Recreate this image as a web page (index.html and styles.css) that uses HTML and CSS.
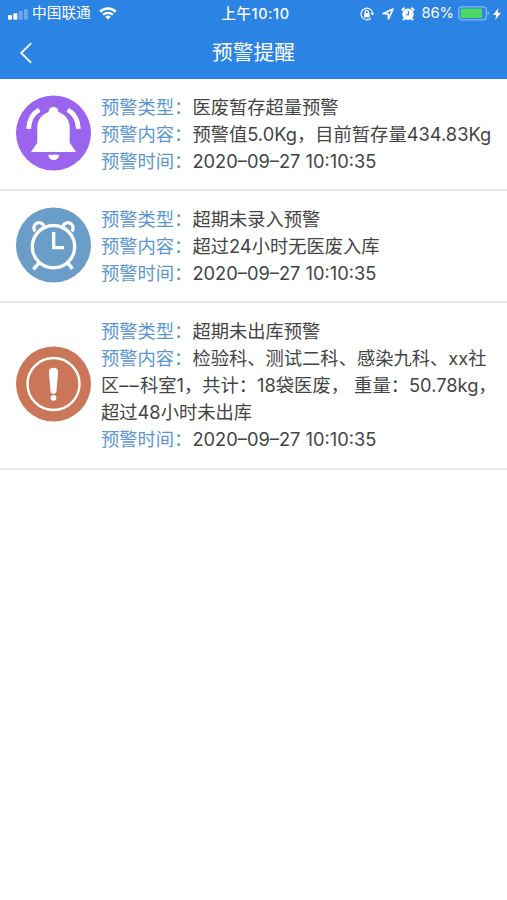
FILE: index.html
```
<!DOCTYPE html>
<html lang="zh-CN">
<head>
    <meta charset="UTF-8">
    <meta name="viewport" content="width=device-width, initial-scale=1.0">
    <title>预警提醒</title>
    <link rel="stylesheet" href="styles.css">
</head>
<body>
    <header class="header">
        <div class="status-bar">
            <div class="status-left">
                <svg class="signal" width="20" height="12" viewBox="0 0 20 12" fill="#fff">
                    <rect x="0" y="7" width="4" height="4.8" rx="1"/>
                    <rect x="5.3" y="5.3" width="4" height="6.5" rx="1"/>
                    <rect x="10.6" y="3" width="4" height="8.8" rx="1" opacity=".3"/>
                    <rect x="15.9" y="1" width="4" height="10.8" rx="1" opacity=".3"/>
                </svg>
                <span class="carrier">中国联通</span>
                <svg width="18" height="13" viewBox="0 0 18 13" fill="none" stroke="#fff">
                    <path d="M1.2 4.7a11.2 11.2 0 0 1 15.6 0" stroke-width="2.6"/>
                    <path d="M4.1 7.8a7 7 0 0 1 9.8 0" stroke-width="2.3"/>
                    <path d="M9 12.6 6.2 9.8a4 4 0 0 1 5.6 0z" fill="#fff" stroke="none"/>
                </svg>
            </div>
            <div class="status-time">上午10:10</div>
            <div class="status-right">
                <svg width="14" height="14" viewBox="0 0 14 14" fill="none" stroke="#fff" stroke-width="1.2">
                    <path d="M10.8 11.3A5.8 5.8 0 1 1 12.6 6"/>
                    <path d="M10.6 6h3.6l-1.8 2.6z" fill="#fff" stroke="none"/>
                    <rect x="4" y="6.2" width="5.6" height="4.2" fill="#fff" stroke="none"/>
                    <path d="M5.2 6.5V5a1.6 1.6 0 0 1 3.2 0v1.5"/>
                </svg>
                <svg class="location" width="12" height="12" viewBox="0 0 12 12" fill="none" stroke="#fff" stroke-width="1.7" stroke-linejoin="round">
                    <path d="M11 1 1.2 5.6l5.1.2.2 5.2z"/>
                </svg>
                <svg class="alarm" width="14" height="14" viewBox="0 0 13 13">
                    <circle cx="6.5" cy="6.8" r="5.3" fill="#fff"/>
                    <path d="M.7 3.3 3.3.8M12.3 3.3 9.7.8M3.2 10.6l-1.3 1.6M9.8 10.6l1.3 1.6" stroke="#fff" stroke-width="1.9"/>
                    <path d="M6.9 4v3.2H4.4" fill="none" stroke="#2b83e4" stroke-width="1"/>
                </svg>
                <span class="percent">86%</span>
                <svg class="battery" width="32" height="15" viewBox="0 0 32 15">
                    <rect x=".7" y=".8" width="27.6" height="13" rx="3" fill="none" stroke="#fff" stroke-opacity=".45" stroke-width="1.2"/>
                    <rect x="2.5" y="2.6" width="21.6" height="9.4" rx="1" fill="#4cd964"/>
                    <path d="M29.6 5.2c2 .8 2 3.4 0 4.2z" fill="#fff" opacity=".5"/>
                </svg>
                <svg class="bolt" width="8" height="12" viewBox="0 0 8 12" fill="#fff">
                    <path d="M5.4 0 0 6.9h3.3L2.3 12 8 4.8H4.6z"/>
                </svg>
            </div>
        </div>
        <div class="nav-bar">
            <svg class="back" width="14" height="22" viewBox="0 0 14 22" fill="none" stroke="#fff" stroke-width="1.8">
                <path d="M12.2 1.2 2.2 11l10 9.8"/>
            </svg>
            <h1 class="title">预警提醒</h1>
        </div>
    </header>

    <ul class="list">
        <li class="item">
            <svg class="item-icon" viewBox="0 0 75 75">
                <circle cx="37.5" cy="37.5" r="37.5" fill="#9b64ee"/>
                <path d="M37.5 11.2a5 5 0 0 0-4.9 5.2C25.5 18.8 21.3 24.5 21.3 32v15.3L15 56.5h45.2l-6.5-9.2V32c0-7.5-4.2-13.2-11.3-15.6a5 5 0 0 0-4.9-5.2z" fill="#fff"/>
                <path d="M32.3 59.3h10.8a5.4 5.4 0 0 1-10.8 0z" fill="#fff"/>
                <path d="M23.3 14.2C16.5 18.2 12.8 24.8 12.6 33.4M51.7 14.2c6.8 4 10.5 10.6 10.7 19.2" fill="none" stroke="#fff" stroke-width="4.8"/>
            </svg>
            <div class="item-text">
                <p><span class="label">预警类型：</span>医废暂存超量预警</p>
                <p><span class="label">预警内容：</span>预警值5.0Kg，目前暂存量434.83Kg</p>
                <p><span class="label">预警时间：</span>2020–09–27 10:10:35</p>
            </div>
        </li>
        <li class="item">
            <svg class="item-icon" viewBox="0 0 75 75">
                <circle cx="37.5" cy="37.5" r="37.5" fill="#6a9dc8"/>
                <g fill="none" stroke="#fff" stroke-width="3.3">
                    <circle cx="37.5" cy="39.2" r="21.2"/>
                    <path d="M19.2 23.8a5.2 5.2 0 1 1 8.8-5.2M47 18.6a5.2 5.2 0 1 1 8.8 5.2"/>
                    <path d="M37.7 24.5v15.7h10.4"/>
                    <path d="m23.3 55.3-6 6.6M51.7 55.3l4.8 6" stroke-width="3.6"/>
                </g>
            </svg>
            <div class="item-text">
                <p><span class="label">预警类型：</span>超期未录入预警</p>
                <p><span class="label">预警内容：</span>超过24小时无医废入库</p>
                <p><span class="label">预警时间：</span>2020–09–27 10:10:35</p>
            </div>
        </li>
        <li class="item">
            <svg class="item-icon" viewBox="0 0 75 75">
                <circle cx="37.5" cy="37.5" r="37.5" fill="#ca7759"/>
                <circle cx="37.5" cy="37.5" r="26" fill="none" stroke="#fff" stroke-width="2.4"/>
                <path d="M37.5 21.2c-3 0-4.8 1.6-4.6 4.5l1.7 19.2c.2 3.2 5.6 3.2 5.8 0l1.7-19.2c.2-2.9-1.6-4.5-4.6-4.5z" fill="#fff"/>
                <circle cx="37.5" cy="51.3" r="2.9" fill="#fff"/>
            </svg>
            <div class="item-text">
                <p><span class="label">预警类型：</span>超期未出库预警</p>
                <p><span class="label">预警内容：</span>检验科、测试二科、感染九科、xx社区<span class="dash">––</span>科室1，共计：18袋医废， 重量：50.78kg，超过48小时未出库</p>
                <p><span class="label">预警时间：</span>2020–09–27 10:10:35</p>
            </div>
        </li>
    </ul>
</body>
</html>
```
FILE: styles.css
```
body {
    margin: 0;
    background-color: #fff;
    font-family: Inter, "Noto Sans CJK SC", sans-serif;
    color: #444;
}
.header {
    height: 79px;
    background-color: #2b83e4;
    color: #fff;
}
.status-bar {
    display: grid;
    grid-template-columns: 1fr auto 1fr;
    align-items: center;
    height: 27px;
    padding: 0 6px 0 8px;
    font-size: 14.7px;
    line-height: 27px;
}
.status-left, .status-right {
    display: flex;
    align-items: center;
}
.status-right {
    justify-content: flex-end;
}
.signal {
    margin-right: 4px;
}
.carrier {
    margin-right: 8px;
}
.status-time {
    padding-left: 2px;
    font-size: 14.5px;
    font-weight: 500;
    letter-spacing: 0.6px;
}
.location {
    margin-left: 8px;
}
.alarm {
    margin-left: 7px;
}
.percent {
    margin-left: 6px;
}
.battery {
    margin-left: 4px;
}
.bolt {
    margin-left: 3px;
}
.nav-bar {
    display: grid;
    grid-template-columns: 60px 1fr 60px;
    align-items: center;
    height: 52px;
}
.back {
    margin-left: 19px;
}
.title {
    margin: 0;
    font-size: 20.7px;
    font-weight: 400;
    line-height: 52px;
    text-align: center;
}
.list {
    margin: 0;
    padding: 0;
    list-style: none;
}
.item {
    display: flex;
    align-items: center;
    padding: 15px 6px 14.2px 16px;
    border-bottom: 2px solid #e9e9e9;
}
.item-icon {
    flex: none;
    width: 75px;
    height: 76px;
    margin-right: 10px;
    margin-bottom: 3px;
}
.item-text {
    flex: 1;
    font-size: 18.3px;
    line-height: 27px;
}
.item-text p {
    margin: 0;
}
.label {
    color: #5c97cf;
}
.dash {
    letter-spacing: 1.2px;
}
```
